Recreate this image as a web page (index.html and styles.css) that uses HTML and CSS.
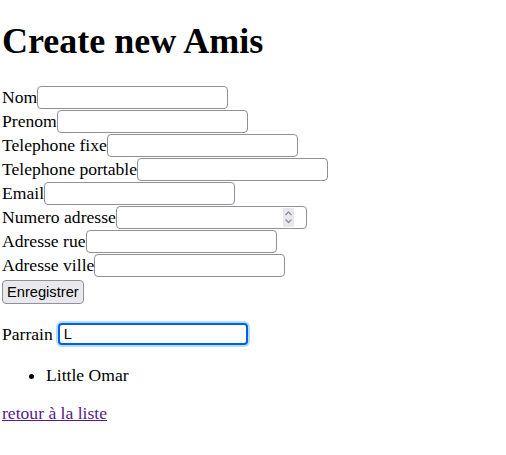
FILE: index.html
```html
<!DOCTYPE html>
<html lang="fr">
<head>
    <meta charset="UTF-8">
    <meta name="viewport" content="width=device-width, initial-scale=1.0">
    <title>Create new Amis</title>
    <link rel="stylesheet" href="styles.css">
</head>
<body>
    <h1>Create new Amis</h1>

    <form class="amis-form">
        <div class="field"><label for="nom">Nom</label><input type="text" id="nom"></div>
        <div class="field"><label for="prenom">Prenom</label><input type="text" id="prenom"></div>
        <div class="field"><label for="tel-fixe">Telephone fixe</label><input type="text" id="tel-fixe"></div>
        <div class="field"><label for="tel-portable">Telephone portable</label><input type="text" id="tel-portable"></div>
        <div class="field"><label for="email">Email</label><input type="text" id="email"></div>
        <div class="field">
            <label for="numero">Numero adresse</label>
            <span class="number-wrap">
                <input type="number" id="numero">
                <span class="spinner">
                    <svg width="9" height="15" viewBox="0 0 9 15">
                        <path d="M1.5 5 L4.5 2 L7.5 5" fill="none" stroke="#8f8f9d" stroke-width="1.3"/>
                        <path d="M1.5 9.5 L4.5 12.5 L7.5 9.5" fill="none" stroke="#8f8f9d" stroke-width="1.3"/>
                    </svg>
                </span>
            </span>
        </div>
        <div class="field"><label for="rue">Adresse rue</label><input type="text" id="rue"></div>
        <div class="field"><label for="ville">Adresse ville</label><input type="text" id="ville"></div>
        <button type="button">Enregistrer</button>
    </form>

    <div class="parrain">
        <label for="parrain">Parrain</label>
        <input type="text" id="parrain" class="focused" value="L">
    </div>

    <ul class="suggestions">
        <li>Little Omar</li>
    </ul>

    <p class="back"><a href="#">retour à la liste</a></p>
</body>
</html>
```

FILE: styles.css
```css
body {
    margin: 0;
    padding: 0 2px;
    font-family: "Liberation Serif", "Times New Roman", serif;
    font-size: 17.6px;
    color: #000;
    background: #fff;
}
h1 {
    font-size: 36px;
    font-weight: bold;
    margin: 21px 0 23.5px;
    line-height: 40.5px;
}
.field {
    display: flex;
    align-items: center;
    height: 24px;
}
input {
    box-sizing: border-box;
    width: 191px;
    height: 23px;
    padding: 0 4px;
    border: 1px solid #8f8f9d;
    border-radius: 4px;
    background: #fff;
    font-family: "Liberation Sans", Arial, sans-serif;
    font-size: 14.67px;
    color: #000;
    outline: none;
}
input[type=number] {
    -moz-appearance: textfield;
    appearance: textfield;
}
input[type=number]::-webkit-inner-spin-button,
input[type=number]::-webkit-outer-spin-button {
    -webkit-appearance: none;
    margin: 0;
}
.number-wrap {
    position: relative;
    display: inline-flex;
}
.spinner {
    position: absolute;
    right: 13px;
    top: 2px;
    width: 11px;
    height: 19px;
    background: #e9e9ed;
    display: flex;
    align-items: center;
    justify-content: center;
}
button {
    box-sizing: border-box;
    margin-top: 3px;
    height: 24px;
    padding: 0 4px;
    background: #e9e9ed;
    border: 1px solid #8f8f9d;
    border-radius: 4px;
    font-family: "Liberation Sans", Arial, sans-serif;
    font-size: 14.67px;
    color: #000;
}
.parrain {
    display: flex;
    align-items: center;
    gap: 5px;
    margin-top: 17px;
    height: 26px;
}
.parrain input {
    width: 190px;
    height: 22px;
    padding: 0 4px;
}
.focused {
    border: 2px solid #0060df;
    box-shadow: 0 0 0 2px #b6dcfb;
}
.suggestions {
    margin: 17.6px 0;
    padding-left: 44px;
}
.back {
    margin: 17.6px 0;
}
.back a {
    color: #551a8b;
}
```
